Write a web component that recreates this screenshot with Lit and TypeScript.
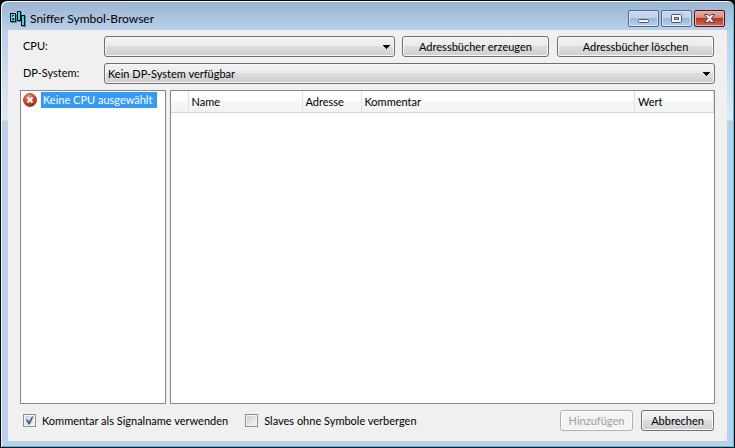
import { LitElement, html, css } from "lit";
import { customElement, property, state } from "lit/decorators.js";

const controls = css`
  * { box-sizing: border-box; }
  button, select, input { font: inherit; color: inherit; margin: 0; }
`;

@customElement("title-bar")
class TitleBar extends LitElement {
  @property() heading = "";

  static styles = [controls, css`
    :host { display: flex; align-items: flex-start; height: 28px; padding: 8px 3px 0 3px; }
    .logo { flex: none; margin: 1px 3px 0 0; }
    h1 { flex: 1; margin: 0; font-size: 12px; line-height: 18px; font-weight: 400; color: #000; }
    .caption { display: flex; gap: 2px; }
    .caption button {
      display: block; width: 31px; height: 17px; padding: 0;
      border: 1px solid #52698c; border-radius: 2px;
      background: linear-gradient(#c0d5ec 0 46%, #98b6d6 47%, #b7d1eb);
      box-shadow: inset 0 0 0 1px #d3e3f4;
    }
    .caption .close {
      border-color: #4c1420;
      background: linear-gradient(#e2a398 0 20%, #d68070 46%, #b9351f 47%, #cf6b54);
      box-shadow: inset 0 0 0 1px #e7b3aa;
    }
    .caption svg { display: block; width: 29px; height: 15px; }
  `];

  render() {
    return html`
      <svg class="logo" width="17" height="16" viewBox="0 0 17 16" shape-rendering="crispEdges" aria-hidden="true">
        <path d="M1 3h6v9H1zM8 1h4v10H8zM12 5h4v11h-4z" fill="#6f7f95"/>
        <path d="M0 2h6v9H0zM7 0h4v10H7zM11 4h4v11h-4z" fill="#000"/>
        <path d="M1 3h4v7H1zM8 1h2v8H8zM12 5h2v9h-2z" fill="#00f2f2"/>
        <path d="M2 4h2v1H2zM2 5h1v4H2zM3 7h1v2H3z" fill="#063c40"/>
        <path d="M3 5h1v1H3zM2 6h1v1H2z" fill="#fff"/>
      </svg>
      <h1>${this.heading}</h1>
      <div class="caption">
        <button aria-label="Minimieren"><svg viewBox="0 0 29 15"><rect x="9.500" y="8.500" width="10" height="3" rx="1" fill="#f6f6f6" stroke="#535666"/></svg></button>
        <button aria-label="Maximieren"><svg viewBox="0 0 29 15"><rect x="9.500" y="3.500" width="10" height="8" rx="1" fill="#f6f6f6" stroke="#535666"/><rect x="12.500" y="6.500" width="4" height="2" fill="#a9c3df" stroke="#535666"/></svg></button>
        <button class="close" aria-label="Schließen"><svg viewBox="0 0 29 15"><path d="M9.500 3.500h3.500l1.500 1.800 1.500-1.800h3.500l-3.200 4 3.200 4h-3.500l-1.500-1.800-1.500 1.800h-3.500l3.200-4z" fill="#f8f8f8" stroke="#55404c" stroke-linejoin="round"/></svg></button>
      </div>`;
  }
}

@customElement("drop-down")
class DropDown extends LitElement {
  @property() label = "";
  @property() value = "";

  static styles = [controls, css`
    :host { display: flex; align-items: center; min-width: 0; }
    label { flex: none; width: 81px; padding-bottom: 2px; }
    .field { position: relative; flex: 1; min-width: 0; }
    select {
      appearance: none; display: block; width: 100%; height: 21px; padding: 0 20px 0 3px;
      border: 1px solid #707070; border-radius: 3px;
      background: linear-gradient(#f2f2f2, #ebebeb 48%, #dddddd 50%, #cfcfcf);
      box-shadow: inset 0 0 0 1px #f8f8f8;
    }
    svg { position: absolute; right: 5px; top: 9px; pointer-events: none; }
  `];

  render() {
    return html`
      <label for="choice">${this.label}</label>
      <div class="field">
        <select id="choice"><option>${this.value}</option></select>
        <svg width="7" height="4" viewBox="0 0 7 4" shape-rendering="crispEdges" aria-hidden="true"><path d="M0 0h7v1H6v1H5v1H4v1H3V3H2V2H1V1H0z" fill="#000"/></svg>
      </div>`;
  }
}

@customElement("check-option")
class CheckOption extends LitElement {
  @property() label = "";
  @property({ type: Boolean }) checked = false;

  static styles = [controls, css`
    label { display: flex; align-items: center; gap: 6px; white-space: nowrap; }
    .box { position: relative; display: block; width: 13px; height: 13px; }
    input {
      appearance: none; display: block; width: 13px; height: 13px;
      border: 1px solid #8e8f8f;
      background: linear-gradient(135deg, #cbcfd5, #f6f6f6) content-box, #f4f4f4;
      padding: 1px;
    }
    svg { position: absolute; inset: 0; pointer-events: none; display: none; }
    input:checked + svg { display: block; }
  `];

  render() {
    return html`
      <label>
        <span class="box">
          <input type="checkbox" .checked=${this.checked} />
          <svg width="13" height="13" viewBox="0 0 13 13" aria-hidden="true"><path d="M3 6l1.500-.8L6 7.500 9 2.500h1.500L6.800 10.500H5.500z" fill="#4259a0"/></svg>
        </span>
        <span>${this.label}</span>
      </label>`;
  }
}

@customElement("app-root")
class AppRoot extends LitElement {
  @state() private columns = [
    { name: "", kind: "mark" },
    { name: "Name", kind: "name" },
    { name: "Adresse", kind: "address" },
    { name: "Kommentar", kind: "comment" },
    { name: "Wert", kind: "value" },
  ];

  static styles = [controls, css`
    :host {
      display: block; min-height: 100vh; background: #000;
      font-family: Lato, "Liberation Sans", sans-serif; font-size: 11px; line-height: 14px; color: #000;
    }
    .window {
      display: flex; flex-direction: column; min-height: 100vh; padding: 1px 6px 6px;
      border: 1px solid #08080c; border-radius: 7px 7px 0 0;
      background: linear-gradient(#99b4d1, #b9d1ea 30px, #dfeaf6 119px, #b9d1ea 120px);
      box-shadow: inset 1px 1px 0 #f4f9fd, inset -1px -1px 0 #27cfe8;
    }
    .client {
      flex: 1; display: flex; flex-direction: column; gap: 6px;
      margin: 0 1px; padding: 6px 12px 9px; background: #f0f0f0;
    }
    .row { display: flex; align-items: center; padding-right: 1px; }
    .row drop-down { flex: 1; margin-right: 7px; }
    .row drop-down, .wide { padding-left: 3px; }
    .push {
      height: 21px; padding: 0; border: 1px solid #707070; border-radius: 3px;
      background: linear-gradient(#f2f2f2, #ebebeb 48%, #dddddd 50%, #cfcfcf);
      box-shadow: inset 0 0 0 1px #fafafa;
    }
    .push:disabled { border-color: #adb2b5; background: #f4f4f4; color: #a0a0a0; box-shadow: inset 0 0 0 1px #fcfcfc; }
    .create { width: 147px; margin-right: 8px; }
    .remove { width: 157px; }
    .panes { flex: 1; display: grid; grid-template-columns: 146px 1fr; gap: 4px; }
    .pane { border: 1px solid #828790; background: #fff; min-width: 0; }
    .tree { list-style: none; margin: 0; padding: 1px 2px; }
    .node { display: flex; align-items: center; gap: 4px; }
    .node svg { flex: none; }
    .picked { height: 16px; padding: 1px 5px 1px 2px; background: #3399ff; color: #fff; white-space: nowrap; }
    table { width: 100%; table-layout: fixed; border-collapse: collapse; }
    th {
      height: 21px; padding: 2px 0 0 3px; text-align: left; font-weight: 400;
      border-right: 1px solid #dfe1e4; border-bottom: 1px solid #d5d5d5;
      background: linear-gradient(#ffffff 0 45%, #f6f7f8 46%, #f1f2f4);
    }
    .mark { width: 17px; }
    .name { width: 114px; }
    .address { width: 59px; }
    .value { width: 79px; }
    .footer { display: flex; align-items: center; gap: 17px; padding: 0 1px 1px 3px; }
    .actions { display: flex; gap: 8px; margin-left: auto; }
    .actions .push { width: 73px; }
  `];

  render() {
    return html`
      <main class="window">
        <title-bar heading="Sniffer Symbol-Browser"></title-bar>
        <div class="client">
          <div class="row">
            <drop-down label="CPU:"></drop-down>
            <button class="push create">Adressbücher erzeugen</button>
            <button class="push remove">Adressbücher löschen</button>
          </div>
          <drop-down class="wide" label="DP-System:" value="Kein DP-System verfügbar"></drop-down>
          <div class="panes">
            <div class="pane">
              <ul class="tree" role="tree">
                <li class="node" role="treeitem" aria-selected="true">
                  <svg width="14" height="14" viewBox="0 0 14 14" aria-hidden="true">
                    <defs><radialGradient id="ball" cx=".4" cy=".25" r=".75"><stop offset="0" stop-color="#f39a7c"/><stop offset=".55" stop-color="#d9482b"/><stop offset="1" stop-color="#a82010"/></radialGradient></defs>
                    <circle cx="7" cy="7" r="6.500" fill="url(#ball)" stroke="#a5362a" stroke-width=".8"/>
                    <path d="M4.500 4.500l5 5M9.500 4.500l-5 5" stroke="#fff" stroke-width="2"/>
                  </svg>
                  <span class="picked">Keine CPU ausgewählt</span>
                </li>
              </ul>
            </div>
            <div class="pane">
              <table>
                <thead><tr>${this.columns.map((c) => html`<th class=${c.kind} scope="col">${c.name}</th>`)}</tr></thead>
                <tbody></tbody>
              </table>
            </div>
          </div>
          <div class="footer">
            <check-option label="Kommentar als Signalname verwenden" checked></check-option>
            <check-option label="Slaves ohne Symbole verbergen"></check-option>
            <div class="actions">
              <button class="push" disabled>Hinzufügen</button>
              <button class="push">Abbrechen</button>
            </div>
          </div>
        </div>
      </main>`;
  }
}
